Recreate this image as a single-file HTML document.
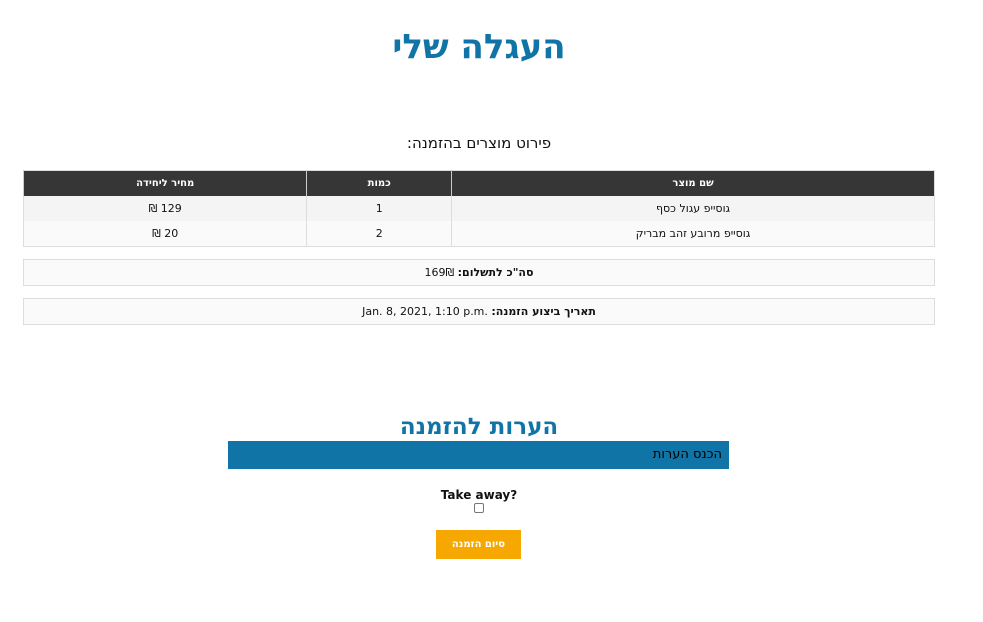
<!DOCTYPE html>
<html dir="rtl"><head><meta charset="utf-8"><style>
body{margin:0;background:#fff;font-family:"DejaVu Sans","Liberation Sans",sans-serif;color:#111;}
.abs{position:absolute;}
h1{position:absolute;top:27px;left:0;width:958px;text-align:center;margin:0;font-size:34px;font-weight:bold;color:#1174a6;}
.sub{top:134px;left:0;width:958px;text-align:center;font-size:15px;}
table{position:absolute;left:23px;top:170px;width:912px;border-collapse:collapse;font-size:11px;border:1px solid #ddd;}
th{background:#363636;color:#fff;height:25px;padding:0;font-weight:bold;border-left:1px solid #ccc;font-size:10px;}
td{height:25px;padding:0;text-align:center;border-left:1px solid #ddd;}
tr.a td{background:#f4f4f4}tr.b td{background:#fafafa}
.box{left:23px;width:910px;height:25px;border:1px solid #ddd;background:#fafafa;text-align:center;font-size:11px;line-height:25px;}
h2{position:absolute;top:414px;left:0;width:958px;text-align:center;margin:0;font-size:23px;color:#1174a6;}
.bar{left:228px;top:441px;width:501px;height:28px;background:#1174a6;font-size:13px;line-height:28px;color:#000;}
</style></head><body>
<h1>העגלה שלי</h1>
<div class="abs sub">פירוט מוצרים בהזמנה:</div>
<table>
<tr><th style="width:483px">שם מוצר</th><th style="width:144px">כמות</th><th style="width:283px">מחיר ליחידה</th></tr>
<tr class="a"><td>גוסייפ עגול כסף</td><td>1</td><td>129 ₪</td></tr>
<tr class="b"><td>גוסייפ מרובע זהב מבריק</td><td>2</td><td>20 ₪</td></tr>
</table>
<div class="abs box" style="top:259px"><b>סה"כ לתשלום:</b> 169₪</div>
<div class="abs box" style="top:298px"><b>תאריך ביצוע הזמנה:</b> <span dir="ltr">Jan. 8, 2021, 1:10 p.m.</span></div>
<h2>הערות להזמנה</h2>
<div class="abs bar"><span style="margin-right:7px">הכנס הערות</span></div>
<div class="abs" style="top:488px;left:0;width:958px;text-align:center;font-size:12px;font-weight:bold" dir="ltr">Take away?</div>
<div class="abs" style="top:503px;left:474px;width:8px;height:8px;border:1px solid #777;border-radius:2px"></div>
<div class="abs" style="top:530px;left:436px;width:85px;height:29px;background:#f7a800;color:#fff;font-size:10px;font-weight:bold;text-align:center;line-height:29px">סיום הזמנה</div>
</body></html>
